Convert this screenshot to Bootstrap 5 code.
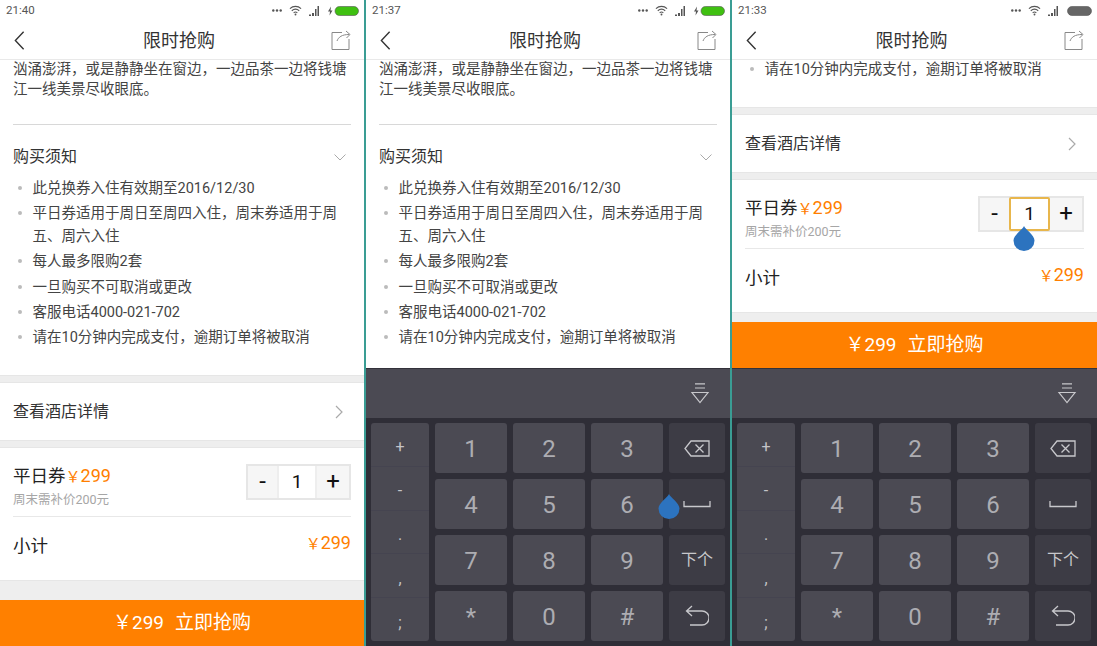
<!DOCTYPE html>
<html lang="zh-CN">
<head>
    <meta charset="UTF-8">
    <meta name="viewport" content="width=device-width, initial-scale=1.0">
    <title>限时抢购</title>
    <link href="https://cdn.jsdelivr.net/npm/bootstrap@5.3.0/dist/css/bootstrap.min.css" rel="stylesheet">
    <style>
        html, body { height: 646px; overflow: hidden; }
        body { background: #3a9d94; font-family: Roboto, "Noto Sans CJK SC", sans-serif; color: #333; }
        .shots { gap: 2px; height: 646px; }
        .phone { width: 364px; height: 646px; background: #fff; overflow: hidden; flex: 0 0 364px; }
        .phone:last-child { flex: 1 1 auto; }

        .status-bar { height: 23px; padding: 0 5px 2px 6px; font-size: 11.5px; color: #555; flex: none; }
        .status-icons { gap: 7px; }
        .batt { margin-left: -2px; }
        .title-bar { height: 37px; padding: 0 13px 0 14px; border-bottom: 1px solid #e9e9e9; flex: none; }
        .page-title { flex: 1; font-size: 18px; line-height: 1; color: #333; text-align: center; padding: 0 0 1px 2px; }
        .title-bar svg { margin-bottom: 2px; }

        .intro { font-size: 14.5px; line-height: 20px; padding: 4px 13px 0; color: #444; height: 68px; margin-top: -4px; }
        .rule { margin: 0 13px; border-top: 1px solid #d8d8d8; }
        .notes-head { font-size: 16px; padding: 21px 18px 10px 13px; line-height: 22px; color: #333; }
        .notes { list-style: none; margin: 0; padding: 0 13px 0 32.5px; font-size: 14.5px; line-height: 22.5px; color: #444; }
        .notes li { position: relative; margin-bottom: 2.9px; }
        .notes li::before { content: ""; position: absolute; left: -15px; top: 8px; width: 4px; height: 4px; border-radius: 50%; background: #bbb; }
        .notes-tail { height: 48px; margin-top: -1px; flex: none; }

        .gap-band { background: #eee; border-top: 1px solid #e6e6e6; border-bottom: 1px solid #e6e6e6; height: 8px; flex: none; }
        .hotel-row { height: 57px; padding: 0 21px 0 13px; font-size: 16px; color: #333; }
        .buy-box { padding: 0 13px; height: 132px; }
        .buy-top { height: 69px; border-bottom: 1px solid #e8e8e8; }
        .ticket { font-size: 17.5px; line-height: 24px; color: #222; padding-top: 16px; }
        .price { color: #ff7f00; font-size: 18px; }
        .price i { font-style: normal; font-size: 15px; }
        .extra { font-size: 12.5px; color: #a6a6a6; line-height: 18px; margin-top: 2px; }
        .stepper { width: 105px; height: 36px; margin-top: 16px; border: 2px solid #e6e6e6; background: #f6f6f6; color: #111; }
        .phone:last-child .stepper { width: 106px; }
        .step-btn { width: 29px; font-size: 24px; line-height: 1; padding-bottom: 2px; }
        .step-btn:last-child { width: 32px; }
        .step-val { flex: 1; background: #fff; font-size: 19px; border-left: 2px solid #eee; border-right: 2px solid #eee; }
        .step-val.active { border: 2px solid #e8b64c; border-radius: 2px; margin: -1px 0; }
        .subtotal { padding-top: 13px; }
        .sub-label { font-size: 17.5px; color: #222; line-height: 32px; }
        .subtotal .price { font-size: 18px; line-height: 26px; }
        .spacer-band { background: #eee; border-top: 1px solid #e6e6e6; flex: none; height: 20px; }
        .spacer-short { height: 10px; }
        .buy-bar { height: 46px; background: #ff8000; color: #fff; font-size: 19px; flex: none; }
        .buy-bar span { margin-right: 11px; }

        .keyboard { background: #2f2e37; flex: 1; }
        .kb-top { height: 50px; background: #4b4a53; border-top: 1px solid #33323a; padding-right: 20px; }
        .kb-keys { display: grid; grid-template-columns: 58px 72px 72px 72px 56px; grid-auto-rows: 50px; gap: 6px; padding: 5px; }
        .kb-side { grid-row: span 4; background: #4a4952; border-radius: 3px; }
        .kb-side div { flex: 1; color: #c4c4c8; font-size: 16px; border-bottom: 1px solid #454450; padding-top: 6px; }
        .kb-side div:last-child { border-bottom: 0; }
        .kb-key { background: #4b4a53; border-radius: 3px; color: #adadb2; font-size: 24px; padding-top: 1px; }
        .kb-fn { background: #3d3c45; font-size: 16px; color: #c8c8cc; padding-top: 0; }
        .drop { position: absolute; z-index: 5; }
        .drop-space { left: 292px; top: 494px; }
        .drop-stepper { left: 281px; top: 226px; }
    </style>
</head>
<body>
    <svg width="0" height="0" class="position-absolute">
        <symbol id="dots" viewBox="0 0 10 3"><circle cx="1.300" cy="1.500" r="1.200" fill="#555"/><circle cx="5" cy="1.500" r="1.200" fill="#555"/><circle cx="8.700" cy="1.500" r="1.200" fill="#555"/></symbol>
        <symbol id="wifi" viewBox="0 0 14 11"><path d="M1 3.500C4.500.3 9.500.3 13 3.500M3 5.800c2.300-2 5.700-2 8 0M5 8c1.200-1 2.800-1 4 0" fill="none" stroke="#555" stroke-width="1.200"/><circle cx="7" cy="9.800" r="1" fill="#555"/></symbol>
        <symbol id="signal" viewBox="0 0 12 10"><path d="M0 8.500h2v1.500h-2zM3 7h2v3h-2zM6 3h1.500v7h-1.500zM8.500 0h1.500v10h-1.500z" fill="#555"/></symbol>
        <symbol id="back" viewBox="0 0 12 22"><path d="M10.500 1.500 1.500 11l9 9.500" fill="none" stroke="#333" stroke-width="1.500"/></symbol>
        <symbol id="share" viewBox="0 0 20 20"><path d="M11 2.500H1v17h17V9" fill="none" stroke="#888" stroke-width="1"/><path d="M6 11c1.500-4 5-6.500 12-6.500M15 1l4 3.500-3.500 3.500" fill="none" stroke="#888" stroke-width="1"/></symbol>
        <symbol id="chev" viewBox="0 0 8 14"><path d="M1 1l6 6-6 6" fill="none" stroke="#aaa" stroke-width="1.200"/></symbol>
        <symbol id="caret" viewBox="0 0 12 7"><path d="M.5.500 6 6l5.500-5.500" fill="none" stroke="#aaa"/></symbol>
        <symbol id="down" viewBox="0 0 20 21"><path d="M5 .8h10M5 5h10M2 9.500h16L10 19.500z" fill="none" stroke="#c8c8cc" stroke-width="1.200"/></symbol>
        <symbol id="del" viewBox="0 0 26 17"><path d="M7 1h18v15H7L1 8.500z" fill="none" stroke="#c8c8cc" stroke-width="1.300"/><path d="M11.500 4.500l8 8M19.500 4.500l-8 8" fill="none" stroke="#c8c8cc" stroke-width="1.300"/></symbol>
        <symbol id="space" viewBox="0 0 28 8"><path d="M1 1v5.500h26V1" fill="none" stroke="#c8c8cc" stroke-width="1.300"/></symbol>
        <symbol id="enter" viewBox="0 0 24 22"><path d="M7 1 1.500 6 7 11M2 6h15a6 6 0 0 1 0 14H5" fill="none" stroke="#c8c8cc" stroke-width="1.300"/></symbol>
        <symbol id="droplet" viewBox="0 0 22 25"><path d="M11 0c1.500 3.500 10.500 9 10.500 14.500a10.500 10.500 0 0 1-21 0C.5 9 9.500 3.500 11 0z" fill="#2c73bf"/></symbol>
    </svg>

    <div class="shots d-flex">
        <!-- first shot: page scrolled, no keyboard -->
        <div class="phone d-flex flex-column">
            <div class="status-bar d-flex justify-content-between align-items-center">
                <span>21:40</span>
                <div class="status-icons d-flex align-items-center">
                    <svg width="10" height="3"><use href="#dots"/></svg>
                    <svg width="13" height="11"><use href="#wifi"/></svg>
                    <svg width="12" height="10"><use href="#signal"/></svg>
                    <svg class="batt" width="33" height="10" viewBox="0 0 33 10"><path d="M5 0.500 2 5.500h2l-.500 4 3-5h-2z" fill="#555"/><rect x="9" y="0.500" width="23.500" height="9" rx="4.500" fill="#3fc011" stroke="#555" stroke-width=".6"/></svg>
                </div>
            </div>
            <div class="title-bar d-flex justify-content-between align-items-center">
                <svg width="11" height="21"><use href="#back"/></svg>
                <div class="page-title">限时抢购</div>
                <svg width="20" height="20"><use href="#share"/></svg>
            </div>
            <div class="intro">汹涌澎湃，或是静静坐在窗边，一边品茶一边将钱塘<br>江一线美景尽收眼底。</div>
            <div class="rule"></div>
            <div class="notes-head d-flex justify-content-between align-items-center">购买须知<svg width="12" height="7"><use href="#caret"/></svg></div>
            <ul class="notes">
                <li>此兑换券入住有效期至2016/12/30</li>
                <li>平日券适用于周日至周四入住，周末券适用于周五、周六入住</li>
                <li>每人最多限购2套</li>
                <li>一旦购买不可取消或更改</li>
                <li>客服电话4000-021-702</li>
                <li>请在10分钟内完成支付，逾期订单将被取消</li>
            </ul>
            <div class="gap-band mt-auto"></div>
            <div class="hotel-row d-flex justify-content-between align-items-center">查看酒店详情<svg width="8" height="14"><use href="#chev"/></svg></div>
            <div class="gap-band"></div>
            <div class="buy-box">
                <div class="buy-top d-flex justify-content-between">
                    <div class="ticket">平日券<span class="price"><i>￥</i>299</span><div class="extra">周末需补价200元</div></div>
                    <div class="stepper d-flex align-items-stretch">
                        <div class="step-btn d-flex justify-content-center align-items-center">-</div>
                        <div class="step-val d-flex justify-content-center align-items-center">1</div>
                        <div class="step-btn d-flex justify-content-center align-items-center">+</div>
                    </div>
                </div>
                <div class="subtotal d-flex justify-content-between">
                    <span class="sub-label">小计</span><span class="price"><i>￥</i>299</span>
                </div>
            </div>
            <div class="spacer-band"></div>
            <div class="buy-bar d-flex justify-content-center align-items-center"><span>￥299</span>立即抢购</div>
        </div>

        <!-- second shot: keyboard open -->
        <div class="phone d-flex flex-column position-relative">
            <div class="status-bar d-flex justify-content-between align-items-center">
                <span>21:37</span>
                <div class="status-icons d-flex align-items-center">
                    <svg width="10" height="3"><use href="#dots"/></svg>
                    <svg width="13" height="11"><use href="#wifi"/></svg>
                    <svg width="12" height="10"><use href="#signal"/></svg>
                    <svg class="batt" width="33" height="10" viewBox="0 0 33 10"><path d="M5 0.500 2 5.500h2l-.500 4 3-5h-2z" fill="#555"/><rect x="9" y="0.500" width="23.500" height="9" rx="4.500" fill="#3fc011" stroke="#555" stroke-width=".6"/></svg>
                </div>
            </div>
            <div class="title-bar d-flex justify-content-between align-items-center">
                <svg width="11" height="21"><use href="#back"/></svg>
                <div class="page-title">限时抢购</div>
                <svg width="20" height="20"><use href="#share"/></svg>
            </div>
            <div class="intro">汹涌澎湃，或是静静坐在窗边，一边品茶一边将钱塘<br>江一线美景尽收眼底。</div>
            <div class="rule"></div>
            <div class="notes-head d-flex justify-content-between align-items-center">购买须知<svg width="12" height="7"><use href="#caret"/></svg></div>
            <ul class="notes">
                <li>此兑换券入住有效期至2016/12/30</li>
                <li>平日券适用于周日至周四入住，周末券适用于周五、周六入住</li>
                <li>每人最多限购2套</li>
                <li>一旦购买不可取消或更改</li>
                <li>客服电话4000-021-702</li>
                <li>请在10分钟内完成支付，逾期订单将被取消</li>
            </ul>
            <div class="keyboard mt-auto flex-grow-0">
                <div class="kb-top d-flex justify-content-end align-items-center"><svg width="20" height="21"><use href="#down"/></svg></div>
                <div class="kb-keys">
                    <div class="kb-side d-flex flex-column">
                        <div class="d-flex justify-content-center align-items-center">+</div>
                        <div class="d-flex justify-content-center align-items-center">-</div>
                        <div class="d-flex justify-content-center align-items-center">.</div>
                        <div class="d-flex justify-content-center align-items-center">,</div>
                        <div class="d-flex justify-content-center align-items-center">;</div>
                    </div>
                    <div class="kb-key d-flex justify-content-center align-items-center">1</div>
                    <div class="kb-key d-flex justify-content-center align-items-center">2</div>
                    <div class="kb-key d-flex justify-content-center align-items-center">3</div>
                    <div class="kb-key kb-fn d-flex justify-content-center align-items-center"><svg width="26" height="17"><use href="#del"/></svg></div>
                    <div class="kb-key d-flex justify-content-center align-items-center">4</div>
                    <div class="kb-key d-flex justify-content-center align-items-center">5</div>
                    <div class="kb-key d-flex justify-content-center align-items-center">6</div>
                    <div class="kb-key kb-fn d-flex justify-content-center align-items-center"><svg width="28" height="8"><use href="#space"/></svg></div>
                    <div class="kb-key d-flex justify-content-center align-items-center">7</div>
                    <div class="kb-key d-flex justify-content-center align-items-center">8</div>
                    <div class="kb-key d-flex justify-content-center align-items-center">9</div>
                    <div class="kb-key kb-fn d-flex justify-content-center align-items-center">下个</div>
                    <div class="kb-key d-flex justify-content-center align-items-center">*</div>
                    <div class="kb-key d-flex justify-content-center align-items-center">0</div>
                    <div class="kb-key d-flex justify-content-center align-items-center">#</div>
                    <div class="kb-key kb-fn d-flex justify-content-center align-items-center"><svg width="24" height="22"><use href="#enter"/></svg></div>
                </div>
            </div>
            <svg class="drop drop-space" width="22" height="25"><use href="#droplet"/></svg>
        </div>

        <!-- third shot: scrolled down, stepper focused -->
        <div class="phone d-flex flex-column position-relative">
            <div class="status-bar d-flex justify-content-between align-items-center">
                <span>21:33</span>
                <div class="status-icons d-flex align-items-center">
                    <svg width="10" height="3"><use href="#dots"/></svg>
                    <svg width="13" height="11"><use href="#wifi"/></svg>
                    <svg width="12" height="10"><use href="#signal"/></svg>
                    <svg width="25" height="10" viewBox="0 0 25 10"><rect x="0.500" y="0.500" width="24" height="9" rx="4.500" fill="#666" stroke="#555" stroke-width=".6"/></svg>
                </div>
            </div>
            <div class="title-bar d-flex justify-content-between align-items-center">
                <svg width="11" height="21"><use href="#back"/></svg>
                <div class="page-title">限时抢购</div>
                <svg width="20" height="20"><use href="#share"/></svg>
            </div>
            <ul class="notes notes-tail">
                <li>请在10分钟内完成支付，逾期订单将被取消</li>
            </ul>
            <div class="gap-band"></div>
            <div class="hotel-row d-flex justify-content-between align-items-center">查看酒店详情<svg width="8" height="14"><use href="#chev"/></svg></div>
            <div class="gap-band"></div>
            <div class="buy-box">
                <div class="buy-top d-flex justify-content-between">
                    <div class="ticket">平日券<span class="price"><i>￥</i>299</span><div class="extra">周末需补价200元</div></div>
                    <div class="stepper d-flex align-items-stretch">
                        <div class="step-btn d-flex justify-content-center align-items-center">-</div>
                        <div class="step-val active d-flex justify-content-center align-items-center">1</div>
                        <div class="step-btn d-flex justify-content-center align-items-center">+</div>
                    </div>
                </div>
                <div class="subtotal d-flex justify-content-between">
                    <span class="sub-label">小计</span><span class="price"><i>￥</i>299</span>
                </div>
            </div>
            <div class="spacer-band spacer-short"></div>
            <div class="buy-bar d-flex justify-content-center align-items-center"><span>￥299</span>立即抢购</div>
            <div class="keyboard">
                <div class="kb-top d-flex justify-content-end align-items-center"><svg width="20" height="21"><use href="#down"/></svg></div>
                <div class="kb-keys">
                    <div class="kb-side d-flex flex-column">
                        <div class="d-flex justify-content-center align-items-center">+</div>
                        <div class="d-flex justify-content-center align-items-center">-</div>
                        <div class="d-flex justify-content-center align-items-center">.</div>
                        <div class="d-flex justify-content-center align-items-center">,</div>
                        <div class="d-flex justify-content-center align-items-center">;</div>
                    </div>
                    <div class="kb-key d-flex justify-content-center align-items-center">1</div>
                    <div class="kb-key d-flex justify-content-center align-items-center">2</div>
                    <div class="kb-key d-flex justify-content-center align-items-center">3</div>
                    <div class="kb-key kb-fn d-flex justify-content-center align-items-center"><svg width="26" height="17"><use href="#del"/></svg></div>
                    <div class="kb-key d-flex justify-content-center align-items-center">4</div>
                    <div class="kb-key d-flex justify-content-center align-items-center">5</div>
                    <div class="kb-key d-flex justify-content-center align-items-center">6</div>
                    <div class="kb-key kb-fn d-flex justify-content-center align-items-center"><svg width="28" height="8"><use href="#space"/></svg></div>
                    <div class="kb-key d-flex justify-content-center align-items-center">7</div>
                    <div class="kb-key d-flex justify-content-center align-items-center">8</div>
                    <div class="kb-key d-flex justify-content-center align-items-center">9</div>
                    <div class="kb-key kb-fn d-flex justify-content-center align-items-center">下个</div>
                    <div class="kb-key d-flex justify-content-center align-items-center">*</div>
                    <div class="kb-key d-flex justify-content-center align-items-center">0</div>
                    <div class="kb-key d-flex justify-content-center align-items-center">#</div>
                    <div class="kb-key kb-fn d-flex justify-content-center align-items-center"><svg width="24" height="22"><use href="#enter"/></svg></div>
                </div>
            </div>
            <svg class="drop drop-stepper" width="22" height="25"><use href="#droplet"/></svg>
        </div>
    </div>
</body>
</html>
